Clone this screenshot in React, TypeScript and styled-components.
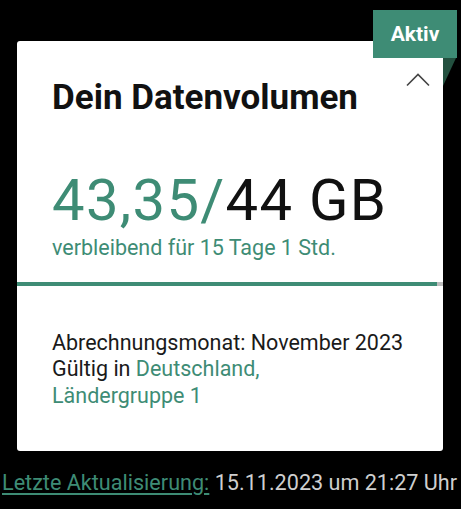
import React from "react";
import styled, { createGlobalStyle } from "styled-components";

const Global = createGlobalStyle`
  html, body { margin: 0; padding: 0; background: #000; }
  body { font-family: Roboto, "Noto Sans", Arial, sans-serif; width: 461px; height: 509px; overflow: hidden; }
`;

const TEAL = "#3e8c75";

const Page = styled.div`
  display: flex;
  flex-direction: column;
  padding-top: 41px;
`;

const Card = styled.section`
  position: relative;
  margin-left: 17px;
  width: 426px;
  height: 410px;
  background: #fff;
  border-radius: 3px;
  display: flex;
  flex-direction: column;
`;

const Badge = styled.div`
  position: absolute;
  top: -31px;
  right: -14px;
  width: 84px;
  height: 48px;
  background: ${TEAL};
  color: #fff;
  font-weight: 700;
  font-size: 21px;
  display: flex;
  align-items: center;
  justify-content: center;
`;

const Fold = styled.div`
  position: absolute;
  top: 17px;
  right: -13px;
  width: 0;
  height: 0;
  border-top: 28px solid #23503f;
  border-right: 13px solid transparent;
`;

const Chevron = styled.svg`
  position: absolute;
  top: 31px;
  right: 12px;
`;

const Header = styled.div`
  padding: 36px 35px 0;
`;

const Title = styled.h1`
  margin: 0;
  font-size: 35px;
  font-weight: 700;
  color: #111;
  line-height: 41px;
`;

const Volume = styled.div`
  margin-top: 50px;
  font-size: 58px;
  letter-spacing: 1.3px;
  line-height: 64px;
  color: #111;
`;

const Accent = styled.span`
  color: ${TEAL};
`;

const Remaining = styled.div`
  margin-top: 2.5px;
  font-size: 21.5px;
  line-height: 26px;
  color: ${TEAL};
`;

const Track = styled.div`
  margin-top: 21.5px;
  height: 4px;
  background: #bdbdbd;
  display: flex;
`;

const Fill = styled.div`
  background: ${TEAL};
  height: 100%;
`;

const Details = styled.div`
  padding: 43.5px 35px 0;
  font-size: 21.5px;
  line-height: 26.5px;
  color: #1a1a1a;
`;

const Line = styled.div``;

const Footer = styled.div`
  margin-top: 17.5px;
  padding-left: 2px;
  font-size: 21.6px;
  line-height: 28px;
  color: #cfcfcf;
  white-space: nowrap;
`;

const Link = styled.span`
  color: ${TEAL};
  text-decoration: underline;
  text-underline-offset: 3px;
`;

export default function App() {
  const used = 43.35;
  const total = 44;
  return (
    <>
      <Global />
      <Page>
        <Card>
          <Badge>Aktiv</Badge>
          <Fold />
          <Chevron width="26" height="15" viewBox="0 0 26 15" fill="none">
            <path d="M2 13.5 L13 2.5 L24 13.5" stroke="#444" strokeWidth="1.6" />
          </Chevron>
          <Header>
            <Title>Dein Datenvolumen</Title>
            <Volume>
              <Accent>43,35/</Accent>44 GB
            </Volume>
            <Remaining>verbleibend für 15 Tage 1 Std.</Remaining>
          </Header>
          <Track>
            <Fill style={{ width: `${(used / total) * 100}%` }} />
          </Track>
          <Details>
            <Line>Abrechnungsmonat: November 2023</Line>
            <Line>
              Gültig in <Accent>Deutschland,</Accent>
            </Line>
            <Line>
              <Accent>Ländergruppe 1</Accent>
            </Line>
          </Details>
        </Card>
        <Footer>
          <Link>Letzte Aktualisierung:</Link> 15.11.2023 um 21:27 Uhr
        </Footer>
      </Page>
    </>
  );
}
